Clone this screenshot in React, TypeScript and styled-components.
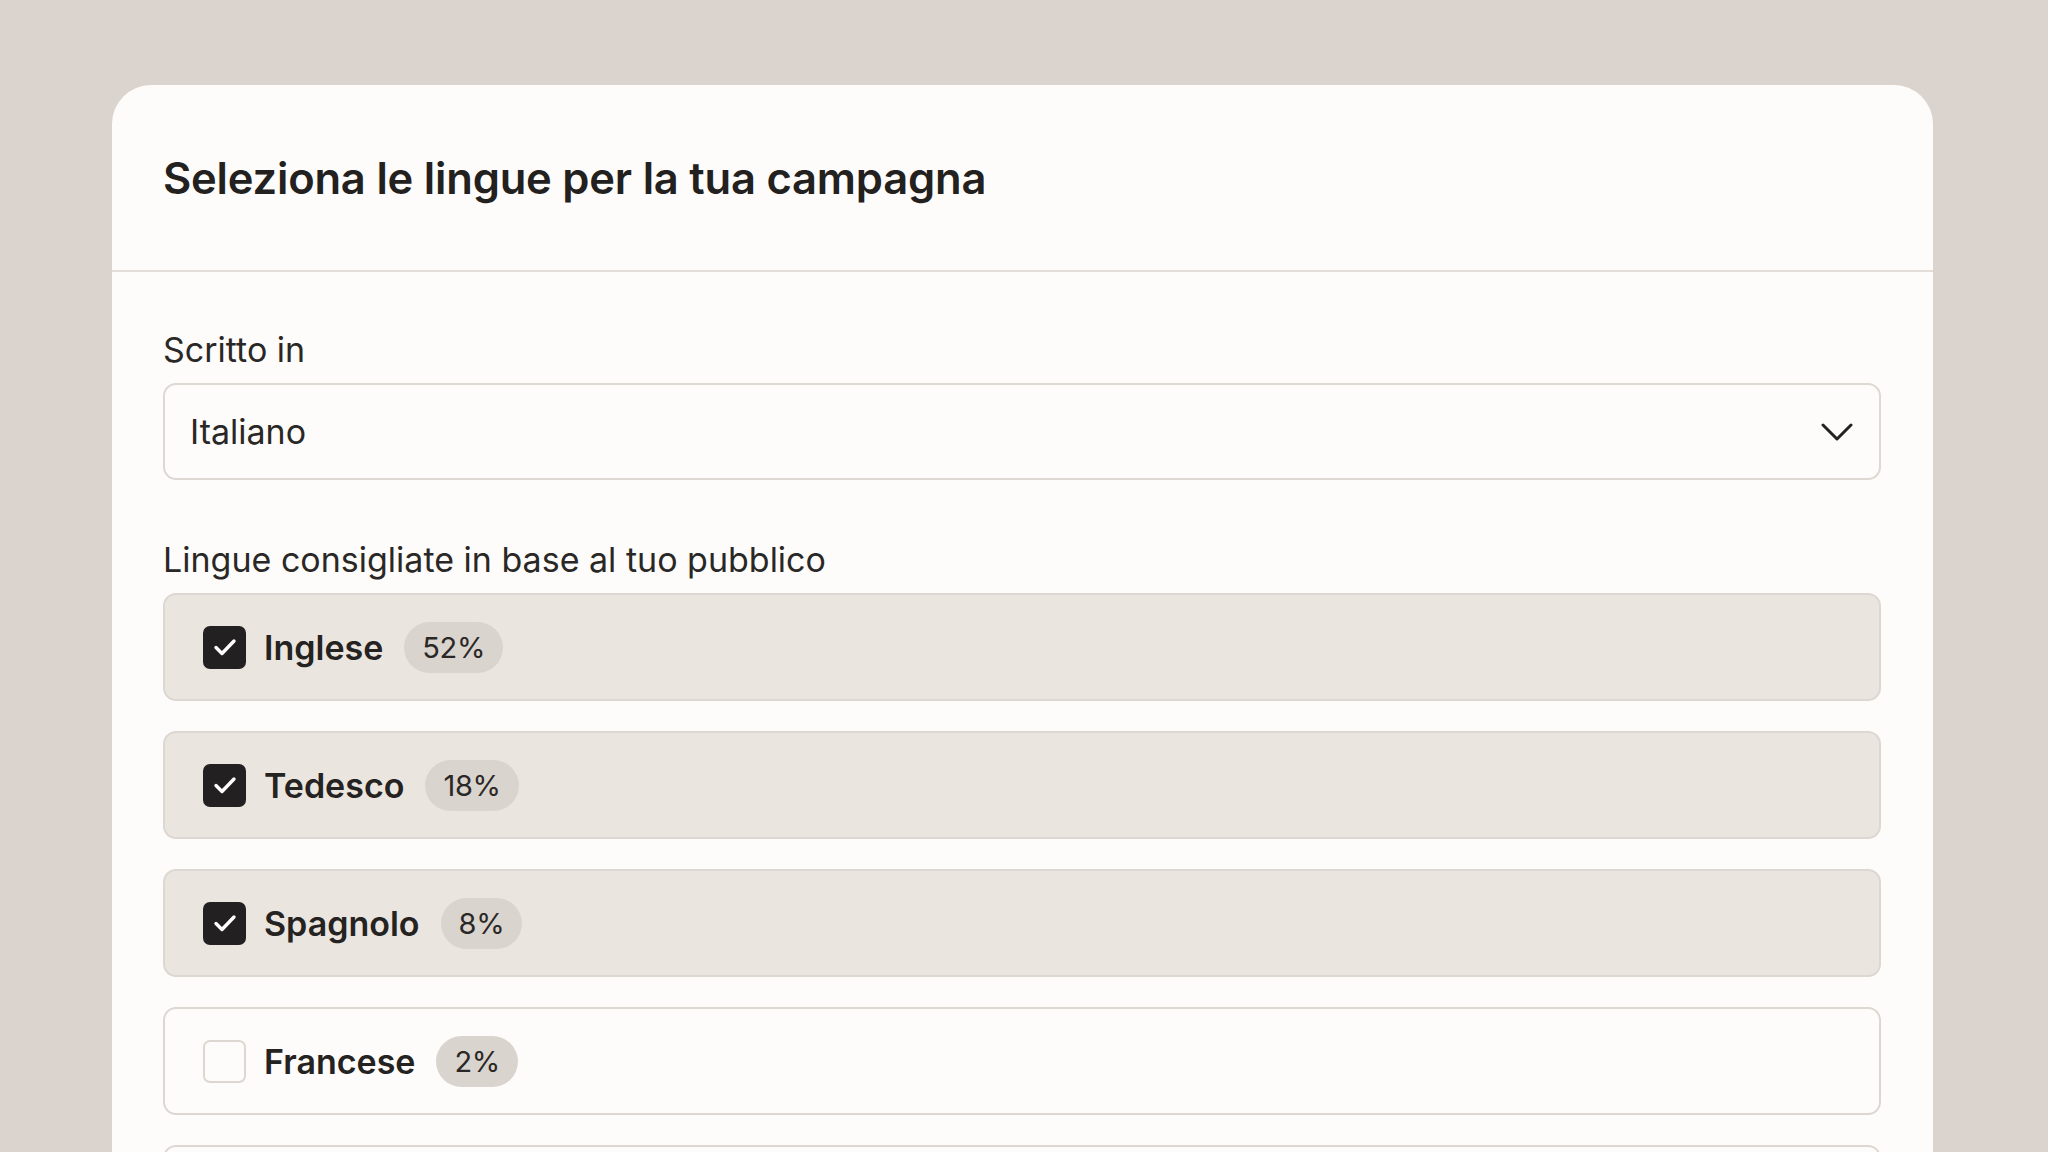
import React, { useState } from 'react';
import styled, { createGlobalStyle } from 'styled-components';

const GlobalStyle = createGlobalStyle`
  html, body {
    margin: 0;
    padding: 0;
    height: 1152px;
    overflow: hidden;
    background-color: #dbd4ce;
  }
  * {
    box-sizing: border-box;
  }
`;

const Page = styled.div`
  padding: 85px 115px 0 112px;
  font-family: Inter, "Noto Sans", "Liberation Sans", sans-serif;
  color: #252321;
`;

const Card = styled.div`
  background-color: #fefcfa;
  border-radius: 39px 39px 0 0;
  min-height: 1200px;
`;

const Header = styled.div`
  height: 187px;
  display: flex;
  align-items: center;
  padding: 0 51px;
  border-bottom: 2px solid #e2ddd8;
`;

const Title = styled.h1`
  margin: 0;
  font-size: 43.5px;
  font-weight: 600;
  letter-spacing: -0.2px;
  color: #232120;
`;

const Body = styled.div`
  padding: 57px 52px 0 51px;
  display: flex;
  flex-direction: column;
`;

const Label = styled.div`
  font-size: 34px;
  line-height: 41px;
  font-weight: 400;
  color: #2a2826;
  margin-bottom: 13px;
`;

const Select = styled.button`
  width: 100%;
  height: 97px;
  display: flex;
  align-items: center;
  justify-content: space-between;
  padding: 0 26px 0 25px;
  background-color: #fefcfa;
  border: 2px solid #ddd8d2;
  border-radius: 13px;
  font-family: inherit;
  font-size: 34px;
  color: #2a2826;
  cursor: pointer;
  margin-bottom: 59px;
  text-align: left;
`;

const List = styled.div`
  display: flex;
  flex-direction: column;
  gap: 30px;
`;

const Row = styled.label<{ $checked: boolean }>`
  height: 108px;
  display: flex;
  align-items: center;
  padding: 0 38px 0 38px;
  border-radius: 13px;
  border: 2px solid #ddd7d1;
  background-color: ${p => (p.$checked ? '#ebe5e0' : '#fefcfa')};
  cursor: pointer;
`;

const Box = styled.span<{ $checked: boolean }>`
  width: 43px;
  height: 43px;
  border-radius: 7px;
  flex-shrink: 0;
  display: flex;
  align-items: center;
  justify-content: center;
  background-color: ${p => (p.$checked ? '#222020' : '#fefcfa')};
  border: ${p => (p.$checked ? 'none' : '2px solid #ddd7d1')};
  margin-right: 18px;
`;

const Name = styled.span`
  font-size: 34px;
  font-weight: 600;
  color: #252321;
  margin-right: 21px;
`;

const Badge = styled.span`
  height: 51px;
  padding: 0 18px;
  border-radius: 26px;
  background-color: #dad4ce;
  display: inline-flex;
  align-items: center;
  font-size: 29px;
  font-weight: 400;
  letter-spacing: -0.3px;
  color: #2a2826;
`;

const Check = () => (
  <svg width="42" height="42" viewBox="0 0 42 42" fill="none">
    <polyline
      points="12,21.5 18,27.5 30,15"
      stroke="#ffffff"
      strokeWidth="3.4"
      strokeLinecap="round"
      strokeLinejoin="round"
    />
  </svg>
);

const Chevron = () => (
  <svg width="32" height="18" viewBox="0 0 32 18" fill="none">
    <polyline
      points="2,2 16,16 30,2"
      stroke="#252321"
      strokeWidth="3"
      strokeLinecap="round"
      strokeLinejoin="round"
    />
  </svg>
);

const initial = [
  { name: 'Inglese', share: '52%', checked: true },
  { name: 'Tedesco', share: '18%', checked: true },
  { name: 'Spagnolo', share: '8%', checked: true },
  { name: 'Francese', share: '2%', checked: false },
  { name: 'Portoghese', share: '1%', checked: false },
];

const App: React.FC = () => {
  const [langs, setLangs] = useState(initial);

  const toggle = (i: number) => {
    setLangs(prev => prev.map((l, j) => (j === i ? { ...l, checked: !l.checked } : l)));
  };

  return (
    <>
      <GlobalStyle />
      <Page>
        <Card>
          <Header>
            <Title>Seleziona le lingue per la tua campagna</Title>
          </Header>
          <Body>
            <Label>Scritto in</Label>
            <Select type="button">
              <span>Italiano</span>
              <Chevron />
            </Select>

            <Label>Lingue consigliate in base al tuo pubblico</Label>
            <List>
              {langs.map((l, i) => (
                <Row key={l.name} $checked={l.checked} onClick={() => toggle(i)}>
                  <Box $checked={l.checked}>{l.checked && <Check />}</Box>
                  <Name>{l.name}</Name>
                  <Badge>{l.share}</Badge>
                </Row>
              ))}
            </List>
          </Body>
        </Card>
      </Page>
    </>
  );
};

export default App;
